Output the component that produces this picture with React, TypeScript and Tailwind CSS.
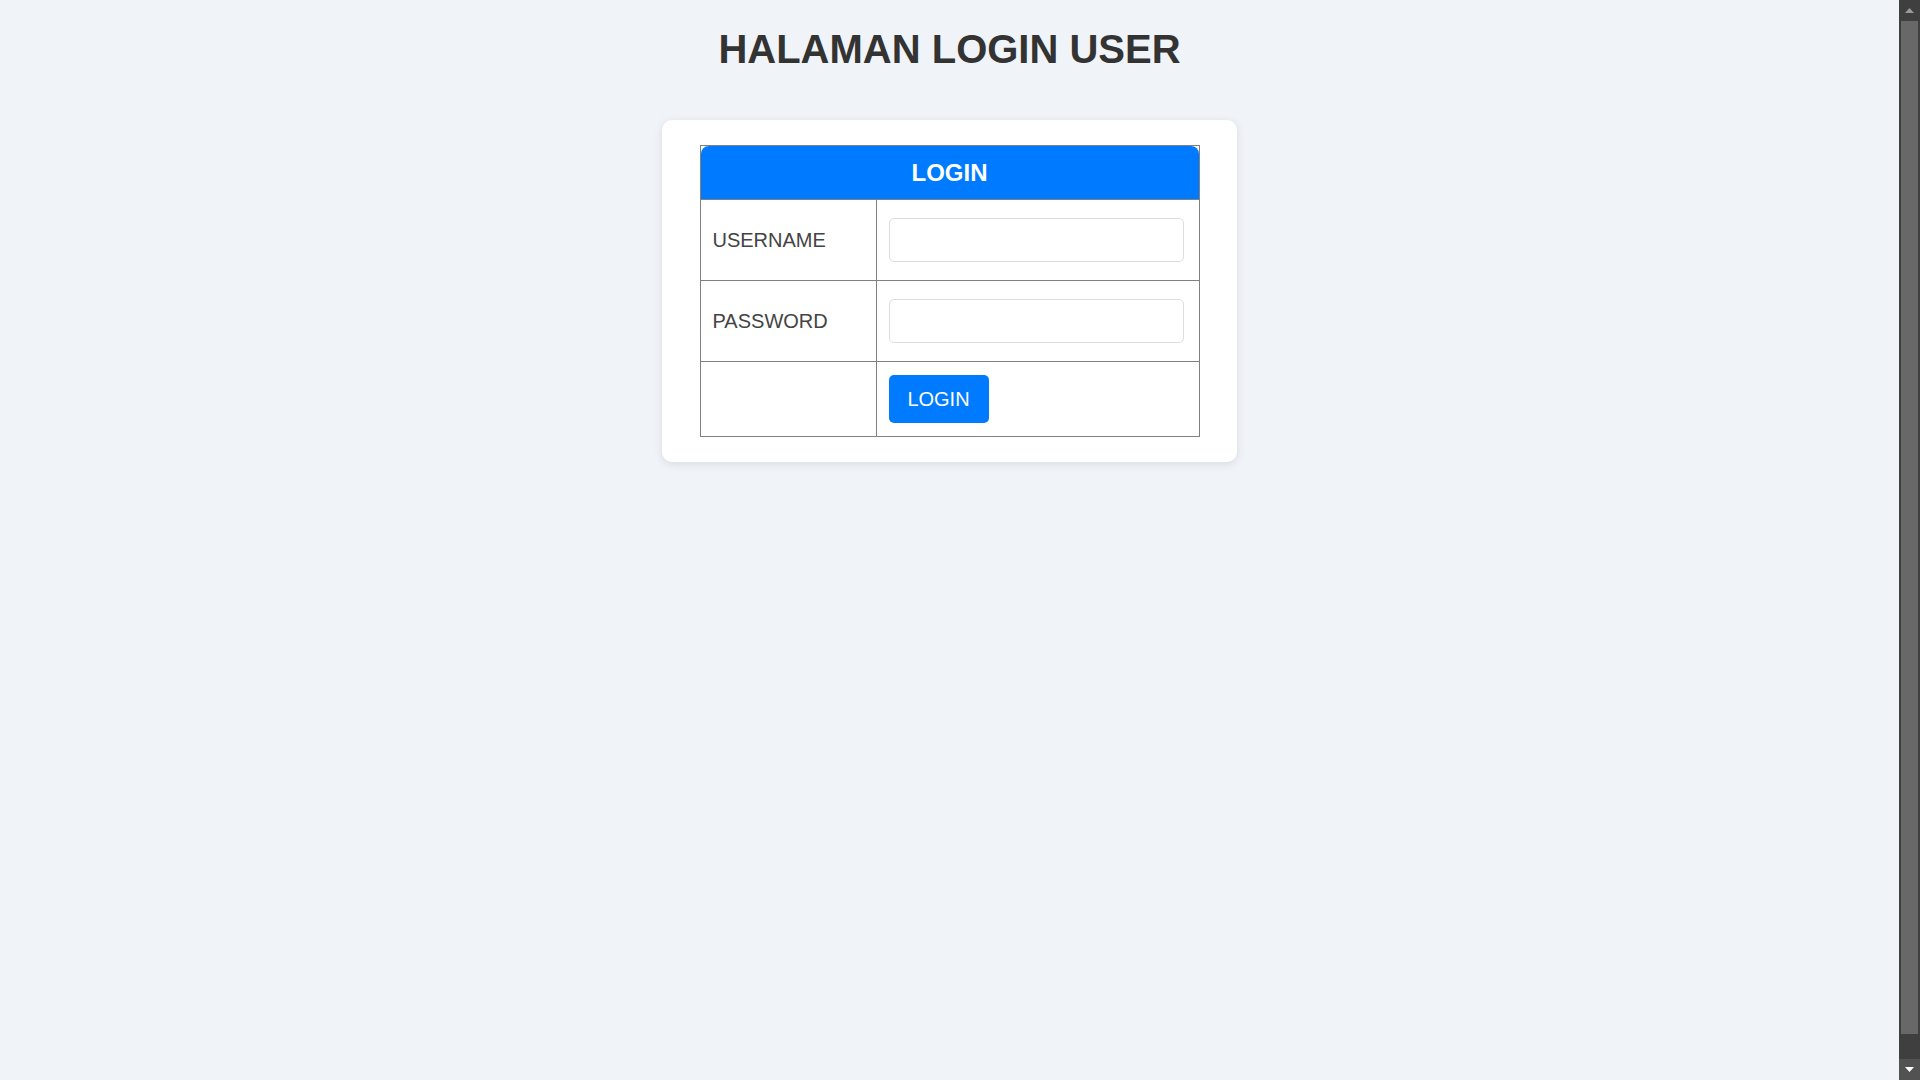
import React from "react";

const Row = ({ label, children, h }: { label?: string; children: React.ReactNode; h: string }) => (
  <div className={`flex border-t border-[#808080] ${h}`}>
    <div className="w-[176px] border-r border-[#808080] flex items-center pl-[12px] text-[20px] text-[#444]">
      {label}
    </div>
    <div className="flex-1 flex items-center pl-[12px]">{children}</div>
  </div>
);

const ScrollBar = () => (
  <div className="w-[21px] h-screen bg-[#3f3f3f] flex flex-col shrink-0">
    <div className="h-[21px] flex items-center justify-center">
      <svg width="9" height="5" viewBox="0 0 9 5">
        <path d="M4.5 0 L9 5 L0 5 Z" fill="#9a9a9a" />
      </svg>
    </div>
    <div className="h-[1013px] mx-[2px] bg-[#686868]" />
    <div className="flex-1" />
    <div className="h-[21px] bg-[#525252] flex items-center justify-center">
      <svg width="9" height="5" viewBox="0 0 9 5">
        <path d="M0 0 L9 0 L4.5 5 Z" fill="#ffffff" />
      </svg>
    </div>
  </div>
);

const App = () => {
  return (
    <div
      className="flex h-screen overflow-hidden bg-[#f0f4f8]"
      style={{ fontFamily: '"Liberation Sans", Arial, sans-serif' }}
    >
      <div className="flex-1 pt-[26px]">
        <h1 className="text-center text-[40px] leading-[46px] font-bold text-[#333]">
          HALAMAN LOGIN USER
        </h1>

        <div className="w-[575px] mx-auto mt-[48px] bg-white rounded-[10px] shadow-[0_2px_10px_rgba(0,0,0,0.1)] pt-[25px] pb-[25px]">
          <div className="w-[500px] mx-auto border border-[#808080]">
            <div className="h-[53px] bg-[#007bff] rounded-t-[8px] flex items-center justify-center text-white text-[24px] font-bold">
              LOGIN
            </div>
            <Row label="USERNAME" h="h-[81px]">
              <input
                type="text"
                className="w-[295px] h-[44px] border border-[#ddd] rounded-[5px] bg-white outline-none px-2"
              />
            </Row>
            <Row label="PASSWORD" h="h-[81px]">
              <input
                type="password"
                className="w-[295px] h-[44px] border border-[#ddd] rounded-[5px] bg-white outline-none px-2"
              />
            </Row>
            <Row h="h-[75px]">
              <button className="w-[100px] h-[48px] bg-[#007bff] text-white text-[20px] rounded-[5px]">
                LOGIN
              </button>
            </Row>
          </div>
        </div>
      </div>
      <ScrollBar />
    </div>
  );
};

export default App;
